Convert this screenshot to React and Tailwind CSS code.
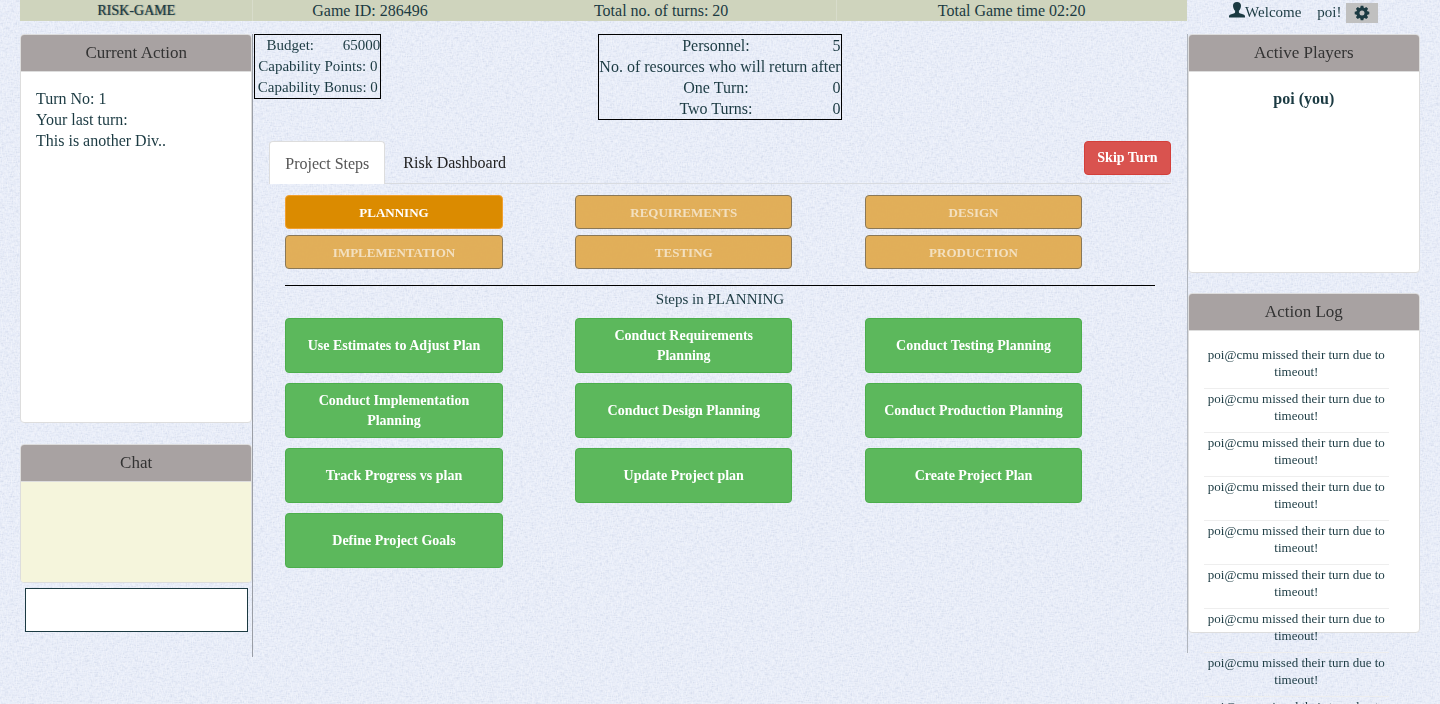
import React from "react";

const phases = ["PLANNING", "REQUIREMENTS", "DESIGN", "IMPLEMENTATION", "TESTING", "PRODUCTION"];

const steps = [
  "Use Estimates to Adjust Plan",
  "Conduct Requirements Planning",
  "Conduct Testing Planning",
  "Conduct Implementation Planning",
  "Conduct Design Planning",
  "Conduct Production Planning",
  "Track Progress vs plan",
  "Update Project plan",
  "Create Project Plan",
  "Define Project Goals",
];

const logEntries = Array.from({ length: 9 }, () => "poi@cmu missed their turn due to timeout!");

function FabricTexture() {
  return (
    <svg aria-hidden="true" className="pointer-events-none fixed inset-0 -z-10 h-full w-full opacity-50">
      <filter id="weave-h" x="0" y="0" width="100%" height="100%" colorInterpolationFilters="sRGB">
        <feTurbulence type="fractalNoise" baseFrequency="0.2 0.8" numOctaves="2" seed="4" />
        <feColorMatrix values="0 0 0 0 0.72  0 0 0 0 0.76  0 0 0 0 0.85  1.6 0 0 0 -0.65" />
      </filter>
      <filter id="weave-v" x="0" y="0" width="100%" height="100%" colorInterpolationFilters="sRGB">
        <feTurbulence type="fractalNoise" baseFrequency="0.8 0.3" numOctaves="2" seed="9" />
        <feColorMatrix values="0 0 0 0 1  0 0 0 0 1  0 0 0 0 1  1.8 0 0 0 -0.65" />
      </filter>
      <rect width="100%" height="100%" filter="url(#weave-h)" />
      <rect width="100%" height="100%" filter="url(#weave-v)" />
    </svg>
  );
}

function UserIcon() {
  return (
    <svg aria-hidden="true" viewBox="0 0 16 16" className="h-4 w-4" fill="currentColor">
      <path d="M8 0C5.400 0 4 1.500 4 3.700c0 1.200.2 2.100.7 3 .3.900.8 1.500 1.400 2.100v1.400c0 .5-.3.800-.8 1L1.500 12.500C.6 12.900 0 13.400 0 14.200V15.500h16v-1.300c0-.8-.6-1.300-1.500-1.700l-3.800-1.300c-.5-.2-.8-.5-.8-1V8.800c.6-.6 1.100-1.200 1.400-2.100.5-.9.7-1.800.7-3C12 1.500 10.600 0 8 0z" />
    </svg>
  );
}

function CogIcon() {
  const teeth = [0, 45, 90, 135, 180, 225, 270, 315];
  return (
    <svg aria-hidden="true" viewBox="-8 -8 16 16" className="h-4 w-4" fill="currentColor">
      {teeth.map((angle) => (
        <path key={angle} d="M-1.900 -4.500L-1.300 -7.300H1.300L1.900 -4.500Z" transform={`rotate(${angle})`} />
      ))}
      <path fillRule="evenodd" d="M0-5.600a5.600 5.600 0 1 0 0 11.200A5.600 5.600 0 0 0 0-5.600zM0-2.500a2.500 2.500 0 1 1 0 5A2.500 2.500 0 0 1 0-2.500z" />
    </svg>
  );
}

function Panel({ title, bodyClass, children }) {
  return (
    <section className="rounded border border-[#dddddd] bg-white">
      <h2 className="rounded-t-[3px] border-b border-[#dddddd] bg-[#a8a2a2] py-2 text-center text-[17px] leading-5 text-[#333333]">
        {title}
      </h2>
      <div className={bodyClass}>{children}</div>
    </section>
  );
}

export default function App() {
  return (
    <div className="relative isolate h-screen overflow-auto bg-[#e8edf9] px-5 font-['Liberation_Serif',serif] text-base leading-[21px] text-[#1b3a42] [scrollbar-width:none]">
      <FabricTexture />
      <header className="grid grid-cols-12 text-center">
        <div className="col-span-10 grid grid-cols-10 bg-[#cfd4bd]">
          <h1 className="col-span-2 border-r border-[#d8dccb] text-sm leading-[21px] [text-shadow:1px_0_1px_#1b3a4299]">RISK-GAME</h1>
          <div className="col-span-2">Game ID: 286496</div>
          <div className="col-span-3 border-r border-[#d8dccb]">Total no. of turns: 20</div>
          <div className="col-span-3">Total Game time 02:20</div>
        </div>
        <div className="col-span-2 flex h-[21px] items-start justify-center text-[15px]">
          <div className="flex items-start pt-0.5">
            <UserIcon />
            <span className="mr-4">Welcome</span>
            <span className="mr-1">poi!</span>
            <button type="button" aria-label="Settings" className="mt-px flex h-5 w-8 items-center justify-center bg-[#c0c0c0]">
              <CogIcon />
            </button>
          </div>
        </div>
      </header>

      <main className="mt-[13px] grid grid-cols-12 items-start">
        <aside className="col-span-2 h-[623px] border-r border-[#9a9ea6]">
          <Panel title="Current Action" bodyClass="h-[350px] px-[15px] pt-4">
            <p>Turn No: 1</p>
            <p>Your last turn:</p>
            <p>This is another Div..</p>
          </Panel>
          <div className="mt-[21px]">
            <Panel title="Chat" bodyClass="h-[100px] rounded-b-[3px] bg-[#f5f5dc]" />
          </div>
          <div className="mt-[5px] pr-1 pl-[5px]">
            <textarea aria-label="Chat message" className="block h-11 w-full resize-none border border-[#1b3a42] bg-white px-1" />
          </div>
        </aside>

        <div className="col-span-8">
          <div className="grid h-[107px] grid-cols-3 items-start">
            <table className="ml-px w-[127px] justify-self-start border border-black text-[15px] leading-[21px]">
              <tbody>
                <tr>
                  <td className="text-center">Budget:</td>
                  <td className="text-right">65000</td>
                </tr>
                <tr>
                  <td colSpan={2} className="text-center whitespace-nowrap">Capability Points: 0</td>
                </tr>
                <tr>
                  <td colSpan={2} className="text-center whitespace-nowrap">Capability Bonus: 0</td>
                </tr>
              </tbody>
            </table>
            <table className="w-[242px] justify-self-center border border-black">
              <tbody>
                <tr>
                  <td className="w-full text-center">Personnel:</td>
                  <td className="text-right">5</td>
                </tr>
                <tr>
                  <td colSpan={2} className="text-center whitespace-nowrap">No. of resources who will return after</td>
                </tr>
                <tr>
                  <td className="text-center">One Turn:</td>
                  <td className="text-right">0</td>
                </tr>
                <tr>
                  <td className="text-center">Two Turns:</td>
                  <td className="text-right">0</td>
                </tr>
              </tbody>
            </table>
          </div>

          <div className="px-4">
            <div className="flex items-start border-b border-[#d8dbe0]">
              <nav className="-mb-px flex items-end gap-0.5" role="tablist">
                <button type="button" role="tab" aria-selected="true" className="h-[43px] rounded-t border border-b-0 border-[#dddddd] bg-white px-[15px] text-[#555555]">
                  Project Steps
                </button>
                <button type="button" role="tab" aria-selected="false" className="h-[43px] px-4 text-[#222222]">
                  Risk Dashboard
                </button>
              </nav>
              <button type="button" className="ml-auto h-[34px] rounded border border-[#d43f3a] bg-[#d9534f] px-3 text-sm font-bold text-white">
                Skip Turn
              </button>
            </div>

            <div className="px-4 pt-[11px]">
              <div className="grid grid-cols-3 gap-y-1.5">
                {phases.map((name, i) => (
                  <button
                    key={name}
                    type="button"
                    disabled={i > 0}
                    className={
                      i === 0
                        ? "h-[34px] w-3/4 rounded border border-[#f0a030] bg-[#db8b00] text-[13px] font-bold text-white"
                        : "h-[34px] w-3/4 rounded border border-[#8a7858] bg-[#e0ab50]/95 text-[13px] font-bold text-[#f3e0c0]"
                    }
                  >
                    {name}
                  </button>
                ))}
              </div>
              <hr className="mt-4 border-t border-black" />
              <h3 className="mt-[3px] text-center text-[15px] leading-[21px]">Steps in PLANNING</h3>
              <div className="mt-2 grid grid-cols-3 gap-y-2.5">
                {steps.map((name) => (
                  <button
                    key={name}
                    type="button"
                    className="h-[55px] w-3/4 rounded border border-[#4cae4c] bg-[#5cb85c] px-3 text-sm leading-5 font-bold text-white"
                  >
                    {name}
                  </button>
                ))}
              </div>
            </div>
          </div>
        </div>

        <aside className="col-span-2 h-[619px] border-l border-[#b0b5bd]">
          <Panel title="Active Players" bodyClass="h-[200px] pt-4 text-center">
            <p className="font-bold">poi (you)</p>
          </Panel>
          <div className="mt-5">
            <Panel title="Action Log" bodyClass="h-[301px] pt-[15px] pr-[30px] pl-[15px]">
              <ul className="text-center text-[13px] leading-[17px]">
                {logEntries.map((entry, i) => (
                  <li key={i} className="mb-px h-[43px] border-b border-[#eeeeee]">
                    {entry}
                  </li>
                ))}
              </ul>
            </Panel>
          </div>
        </aside>
      </main>
    </div>
  );
}
